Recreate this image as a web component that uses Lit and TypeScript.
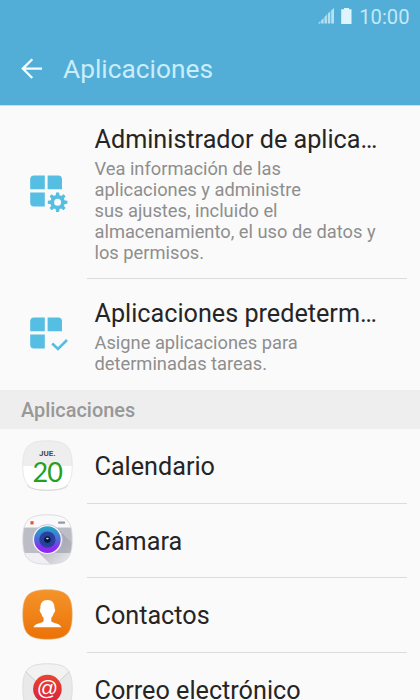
import { LitElement, html, css, svg } from "lit";
import { customElement, property } from "lit/decorators.js";

type IconName = "manager" | "defaults" | "calendar" | "camera" | "contacts" | "email";

interface SettingsEntry {
  icon: IconName;
  title: string;
  description?: string;
}

const SETTINGS: SettingsEntry[] = [
  {
    icon: "manager",
    title: "Administrador de aplica…",
    description:
      "Vea información de las\naplicaciones y administre\nsus ajustes, incluido el\nalmacenamiento, el uso de datos y\nlos permisos.",
  },
  {
    icon: "defaults",
    title: "Aplicaciones predeterm…",
    description: "Asigne aplicaciones para\ndeterminadas tareas.",
  },
];

const APPS: SettingsEntry[] = [
  { icon: "calendar", title: "Calendario" },
  { icon: "camera", title: "Cámara" },
  { icon: "contacts", title: "Contactos" },
  { icon: "email", title: "Correo electrónico" },
];

const SQUIRCLE =
  "M25.5 .8C44.5 .8 50.2 6.5 50.2 25.5S44.5 50.2 25.5 50.2 .8 44.5 .8 25.5 6.5 .8 25.5 .8Z";

const tiles = svg`
  <path fill="#55bee2" d="M12 9.5H22.8V23.3H8.2V13.3Q8.2 9.5 12 9.5Z" />
  <path fill="#55bee2" d="M25.6 9.5H36.2Q40 9.5 40 13.3V23.3H25.6Z" />
  <path fill="#55bee2" d="M8.2 26.6H22.8V40.6H12Q8.2 40.6 8.2 36.8Z" />
`;

const ICONS = {
  manager: svg`
    ${tiles}
    <circle cx="35.6" cy="36.2" r="11" fill="#fafafa" />
    <circle cx="35.6" cy="36.2" r="5.4" fill="none" stroke="#55bee2" stroke-width="3.8" />
    ${[0, 45, 90, 135, 180, 225, 270, 315].map(
      (angle) => svg`<path fill="#55bee2" d="M33.6 30L34.1 26.4H37.1L37.6 30Z" transform="rotate(${angle} 35.6 36.2)" />`
    )}
  `,
  defaults: svg`
    ${tiles}
    <path fill="none" stroke="#55bee2" stroke-width="2.7" d="M30.2 35.6L36 40.9L45 32" />
  `,
  calendar: svg`
    <path d=${SQUIRCLE} fill="#fff" />
    <path d="M.8 26C.8 6.5 6.5 .8 25.5 .8S50.2 6.5 50.2 26Z" fill="#eeeeee" />
    <path d=${SQUIRCLE} fill="none" stroke="#e2e2e2" stroke-width=".8" />
    <path d="M5 45.5Q9 50.3 25.5 50.3T46 45.5" fill="none" stroke="#d0d0d0" stroke-width=".8" />
    <text x="25.3" y="16.1" text-anchor="middle" font-size="8" font-weight="700" fill="#484848">JUE.</text>
    <text class="day" x="25.2" y="42.3" text-anchor="middle" font-size="27" fill="#24a01c">20</text>
  `,
  camera: svg`
    <defs>
      <clipPath id="body"><path d=${SQUIRCLE} /></clipPath>
      <linearGradient id="lens" x1="0" y1="0" x2="0" y2="1">
        <stop offset="0" stop-color="#22a9c5" />
        <stop offset=".5" stop-color="#5068d9" />
        <stop offset=".8" stop-color="#8b2cf4" />
        <stop offset="1" stop-color="#8d28f0" />
      </linearGradient>
      <radialGradient id="glass">
        <stop offset="0" stop-color="#071026" />
        <stop offset=".35" stop-color="#081a4b" />
        <stop offset=".45" stop-color="#233f9c" />
        <stop offset="1" stop-color="#2d439f" />
      </radialGradient>
      <linearGradient id="shade" x1="0" y1="0" x2="1" y2="1">
        <stop offset=".3" stop-color="#8f8e9d" stop-opacity=".6" />
        <stop offset="1" stop-color="#8f8e9d" stop-opacity="0" />
      </linearGradient>
    </defs>
    <g clip-path="url(#body)">
      <rect width="51" height="51" fill="#f9f9fb" />
      <rect y="13.5" width="51" height="25.5" fill="#bdbdc7" />
      <rect y="39" width="51" height="12" fill="#efeff4" />
      <path d="M36 15L51 30V51H29L15 37Z" fill="url(#shade)" />
    </g>
    <rect x="8.4" y="7.2" width="3.2" height="3.2" fill="#e8552d" />
    <rect x="36" y="7.6" width="7.2" height="2.1" rx="1" fill="#9a99a0" />
    <circle cx="25.4" cy="25.6" r="15.1" fill="#f3f3f7" stroke="#b5b4c1" stroke-width=".7" />
    <circle cx="25.4" cy="25.6" r="13.3" fill="url(#lens)" />
    <circle cx="25.4" cy="25.6" r="8.2" fill="url(#glass)" />
    <ellipse cx="25.4" cy="24.6" rx="1.4" ry=".8" fill="#d6d7e0" />
    <path d=${SQUIRCLE} fill="none" stroke="#d9d9de" stroke-width=".9" />
  `,
  contacts: svg`
    <defs>
      <linearGradient id="orange" x1="0" y1="0" x2="0" y2="1">
        <stop offset="0" stop-color="#f4942a" />
        <stop offset="1" stop-color="#eb7207" />
      </linearGradient>
    </defs>
    <path d=${SQUIRCLE} fill="url(#orange)" stroke="#e7ad73" stroke-width=".6" />
    <path
      fill="#fff"
      d="M25.4 11C30.2 11 32.8 14.3 32.5 19.4C33.8 20 33.1 23.3 31.8 24C31.2 26.3 30.3 27.8 29.3 28.8V32.3C31 34.6 37.7 34.1 39.4 38.3H11.4C13.1 34.1 19.9 34.6 21.6 32.3V28.8C20.5 27.8 19.7 26.3 19.1 24C17.8 23.3 17.1 20 18.4 19.4C18.1 14.3 20.6 11 25.4 11Z"
    />
  `,
  email: svg`
    <defs>
      <linearGradient id="seal" x1="0" y1="0" x2="0" y2="1">
        <stop offset="0" stop-color="#e8452f" />
        <stop offset="1" stop-color="#d8223f" />
      </linearGradient>
    </defs>
    <path d=${SQUIRCLE} fill="#e9e9e9" />
    <path d="M3.5 8L25.5 29L47.5 8Q42 .8 25.5 .8T3.5 8Z" fill="#f2f2f2" />
    <path d="M3.5 8.5L25.5 29.5L47.5 8.5" fill="none" stroke="#d0d0d0" stroke-width="1" />
    <path d=${SQUIRCLE} fill="none" stroke="#dbdbdb" stroke-width=".9" />
    <circle cx="25.4" cy="26" r="14.3" fill="url(#seal)" />
    <text class="at" x="25.4" y="32" text-anchor="middle" font-size="21" fill="#fff">@</text>
  `,
};

@customElement("app-icon")
export class AppIcon extends LitElement {
  @property({ type: String }) name: IconName = "manager";

  static styles = css`
    :host {
      display: block;
      width: 51px;
      height: 51px;
    }

    svg {
      display: block;
      font-family: Roboto, sans-serif;
    }

    .day {
      font-family: Lato, sans-serif;
      font-weight: 400;
      letter-spacing: -1px;
    }

    .at {
      font-family: "Liberation Sans", sans-serif;
      font-weight: 400;
    }
  `;

  render() {
    return html`<svg width="51" height="51" viewBox="0 0 51 51">${ICONS[this.name]}</svg>`;
  }
}

@customElement("settings-row")
export class SettingsRow extends LitElement {
  @property({ attribute: false }) entry!: SettingsEntry;

  static styles = css`
    :host {
      display: flex;
      align-items: center;
      box-sizing: border-box;
    }

    .icon {
      flex: none;
      width: 65px;
      padding: 0 0 2px 22px;
    }

    .body {
      flex: 1;
      min-width: 0;
      align-self: stretch;
      display: flex;
      flex-direction: column;
      justify-content: center;
      box-sizing: border-box;
      margin-right: 13px;
      padding: 3px 8px 0 7.5px;
      border-bottom: 1px solid var(--divider, #dcdcdc);
    }

    .title {
      font-size: 25.2px;
      line-height: 32px;
      color: #252525;
      white-space: nowrap;
    }

    .description {
      font-size: 18.3px;
      line-height: 21px;
      color: #8e8e8e;
      white-space: pre;
    }

    .title + .description {
      padding-top: 2px;
    }
  `;

  render() {
    const { icon, title, description } = this.entry;
    return html`
      <div class="icon"><app-icon name=${icon}></app-icon></div>
      <div class="body">
        <div class="title">${title}</div>
        ${description ? html`<div class="description">${description}</div>` : ""}
      </div>
    `;
  }
}

@customElement("app-root")
export class AppRoot extends LitElement {
  static styles = css`
    :host {
      display: flex;
      flex-direction: column;
      height: 700px;
      overflow: hidden;
      background: #fafafa;
      font-family: Roboto, sans-serif;
    }

    .header {
      flex: none;
      height: 106px;
      margin-bottom: -1px;
      background: #52aed6;
      border-bottom: 1px solid #c5e1ee;
      box-sizing: border-box;
    }

    .status {
      display: flex;
      align-items: center;
      justify-content: flex-end;
      height: 32px;
      padding-right: 10.5px;
      font-size: 20.2px;
      line-height: 24px;
      color: #c4e8f6;
    }

    .status span {
      padding-top: 2px;
    }

    .signal {
      margin-right: 6px;
    }

    .battery {
      margin-right: 7px;
    }

    .toolbar {
      display: flex;
      align-items: center;
      height: 73px;
      padding-left: 20px;
      gap: 19px;
    }

    .heading {
      margin: 0;
      font-size: 26.3px;
      font-weight: 400;
      line-height: 32px;
      color: #c9edfb;
    }

    .settings,
    .apps {
      flex: none;
    }

    .manager {
      height: 174px;
    }

    .defaults {
      height: 111px;
      --divider: transparent;
    }

    .section {
      flex: none;
      height: 39px;
      padding-left: 21px;
      background: #eeeeee;
      font-size: 19.9px;
      font-weight: 500;
      line-height: 41px;
      color: #989898;
    }

    .app {
      height: 74.5px;
    }
  `;

  render() {
    return html`
      <header class="header">
        <div class="status">
          <svg class="signal" width="17" height="16" viewBox="0 0 17 16" fill="#b8e0f1">
            <path d="M0 15.5L2.4 13V15.5ZM3.2 12.5L5.6 10V15.5H3.2ZM6.5 9L8.9 6.5V15.5H6.5ZM9.8 5.8L12.3 3.3V15.5H9.8ZM13.2 2.5L16 0V15.5H13.2Z" />
          </svg>
          <svg class="battery" width="11" height="16" viewBox="0 0 11 16" fill="#dff5fd">
            <path d="M3 0H8V1.3H10.5V16H.2V1.3H3Z" />
          </svg>
          <span>10:00</span>
        </div>
        <div class="toolbar">
          <svg width="24" height="24" viewBox="0 0 24 24" fill="none" stroke="#f3fcff" stroke-width="2.3">
            <path d="M22 11.6H3M12.3 2.2L2.8 11.6L12.3 21" />
          </svg>
          <h1 class="heading">Aplicaciones</h1>
        </div>
      </header>
      <div class="settings">
        ${SETTINGS.map((entry) => html`<settings-row class=${entry.icon} .entry=${entry}></settings-row>`)}
      </div>
      <div class="section">Aplicaciones</div>
      <div class="apps">
        ${APPS.map((entry) => html`<settings-row class="app" .entry=${entry}></settings-row>`)}
      </div>
    `;
  }
}

declare global {
  interface HTMLElementTagNameMap {
    "app-icon": AppIcon;
    "settings-row": SettingsRow;
    "app-root": AppRoot;
  }
}
